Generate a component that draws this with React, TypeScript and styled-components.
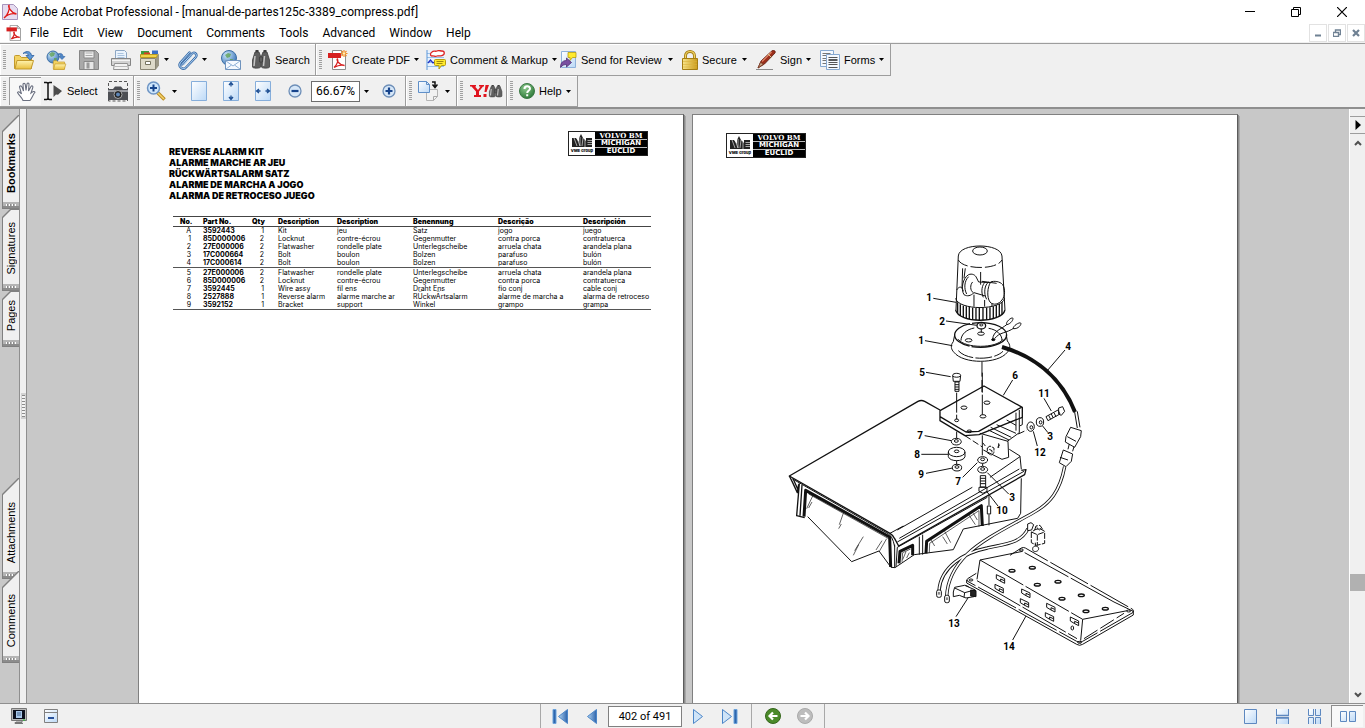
import React from "react";
import styled, { createGlobalStyle, css } from "styled-components";

const GlobalStyle = createGlobalStyle`
  * { box-sizing: border-box; }
  html, body, #root { height: 100%; }
  body {
    margin: 0;
    overflow: hidden;
    background: #f0f0f0;
    color: #000;
    font-family: Roboto, "Liberation Sans", sans-serif;
    font-size: 12px;
  }
  button, input { font: inherit; color: inherit; }
  svg { display: block; flex: none; }
`;

/* ---------- frame ---------- */

const Window = styled.div`
  display: flex;
  flex-direction: column;
  height: 100vh;
`;

const PlainButton = styled.button`
  display: flex;
  align-items: center;
  justify-content: center;
  margin: 0;
  padding: 0;
  border: 0;
  background: transparent;
`;

const TitleBar = styled.header`
  display: flex;
  align-items: center;
  height: 24px;
  padding-left: 2px;
  background: #fff;
`;

const Title = styled.h1`
  flex: 1;
  margin: 0 0 0 5px;
  font-size: 12px;
  font-weight: 400;
  line-height: 24px;
`;

const CaptionButton = styled(PlainButton)`
  width: 46px;
  height: 20px;
`;

const MenuBar = styled.nav`
  display: flex;
  align-items: center;
  height: 18px;
  padding-left: 6px;
  background: #fff;
`;

const MenuItem = styled(PlainButton)`
  padding: 0 7px;
  line-height: 18px;
`;

const Spacer = styled.div<{ $grow?: number }>`
  flex: ${(p) => p.$grow ?? 1};
`;

const MdiButton = styled(PlainButton)`
  width: 18px;
  height: 18px;
  margin-left: 1px;
  border: 1px solid #e2e2e2;
`;

/* ---------- toolbars ---------- */

const Toolbars = styled.div`
  border-top: 1px solid #f0f0f0;
  border-bottom: 2px solid #8f8f8f;
  background: #f0f0f0;
`;

const ToolRow = styled.div<{ $line?: boolean }>`
  display: flex;
  height: 31px;
  ${(p) => p.$line && css`height: 33px; border-top: 1px solid #9d9d9d;`}
`;

const ToolGroup = styled.div`
  display: flex;
  align-items: center;
  border-right: 1px solid #9d9d9d;
  border-bottom: 1px solid #9d9d9d;
  box-shadow: inset 1px 1px 0 #fff;
`;

const Grip = styled.div`
  width: 3px;
  height: 20px;
  margin: 0 3px;
  background: repeating-linear-gradient(#a0a0a0 0 1px, #f0f0f0 1px 2px);
`;

const ToolButton = styled(PlainButton)<{ $w: number; $active?: boolean; $label?: boolean }>`
  width: ${(p) => p.$w}px;
  height: 28px;
  gap: 4px;
  font-family: "Liberation Sans", Arial, sans-serif;
  font-size: 11px;
  white-space: nowrap;
  ${(p) => p.$label && css`justify-content: flex-start; padding: 0 6px 0 3px;`}
  ${(p) => p.$active && css`
    background: #f8f8f8;
    border-left: 1px solid #9d9d9d;
    border-top: 1px solid #9d9d9d;
  `}
`;

const ArrowSlot = styled.span`
  margin-left: auto;
`;

const ZoomField = styled.input`
  width: 49px;
  height: 21px;
  padding: 0 0 0 4px;
  border: 1px solid #6e6e6e;
  background: #fff;
`;

/* ---------- body ---------- */

const Body = styled.main`
  display: flex;
  flex: 1;
  min-height: 0;
  background: #c8c8c8;
`;

const TabStrip = styled.aside`
  display: flex;
  flex-direction: column;
  width: 20px;
  padding: 6px 0 40px 2px;
  border-right: 1px solid #8f8f8f;
`;

const cutCorner = css<{ $cut: number }>`
  clip-path: polygon(0 ${(p) => p.$cut}px, ${(p) => p.$cut}px 0, 100% 0, 100% 100%, 0 100%);
`;

const TabShape = styled(PlainButton)<{ $h: number; $cut: number; $overlap?: boolean }>`
  flex: none;
  flex-direction: column;
  justify-content: stretch;
  align-items: stretch;
  height: ${(p) => p.$h}px;
  margin-top: ${(p) => (p.$overlap ? "-8px" : "0")};
  padding: 1px 0 1px 1px;
  background: #808080;
  ${cutCorner}
`;

const TabFace = styled.span<{ $cut: number; $bold?: boolean }>`
  display: flex;
  flex: 1;
  align-items: center;
  justify-content: flex-end;
  padding-bottom: 9px;
  background: #f0f0f0;
  font-family: "Liberation Sans", Arial, sans-serif;
  font-size: 11px;
  font-weight: ${(p) => (p.$bold ? 700 : 400)};
  line-height: 16px;
  writing-mode: vertical-rl;
  ${cutCorner}
`;

const TabText = styled.span`
  writing-mode: vertical-rl;
  transform: rotate(180deg);
`;

const TabFoot = styled.span`
  height: 6px;
  padding: 2px 3px;
  background: #b4b4b4;
  border-bottom: 2px solid #8c8c8c;
  &::before {
    content: "";
    display: block;
    height: 2px;
    background: repeating-linear-gradient(90deg, #fff 0 1px, #8c8c8c 1px 2px, #b4b4b4 2px 3px);
  }
`;

const Splitter = styled.div`
  display: flex;
  align-items: center;
  justify-content: center;
  width: 7px;
  border-right: 1px solid #8f8f8f;
  background: #f0f0f0;
`;

const SplitHandle = styled.div`
  width: 5px;
  height: 26px;
  background: #d2d2d2;
  padding: 2px 1px;
  &::before {
    content: "";
    display: block;
    width: 3px;
    height: 22px;
    background: repeating-linear-gradient(#8c8c8c 0 1px, #f4f4f4 1px 3px);
  }
`;

const Pages = styled.section`
  display: flex;
  flex: 1;
  justify-content: center;
  gap: 8px;
  min-width: 0;
  overflow: hidden;
  padding-top: 5px;
`;

const Sheet = styled.article`
  flex: none;
  width: 546px;
  height: 705px;
  background: #fff;
  border: 1px solid #808080;
  border-right-color: #5c5c5c;
  box-shadow: 1px 1px 0 #8c8c8c, 2px 2px 0 #a8a8a8;
`;

const PartsHead = styled.div`
  display: flex;
  justify-content: space-between;
  padding: 16px 35px 0 30px;
`;

const KitNames = styled.h2`
  margin: 15px 0 0;
  font-family: Inter, "Liberation Sans", sans-serif;
  font-size: 9px;
  font-weight: 900;
  line-height: 11px;
  white-space: nowrap;
  span { display: block; }
`;

const PartsTable = styled.table`
  width: 478px;
  margin: 15px 0 0 34px;
  border-collapse: collapse;
  table-layout: fixed;
  font-family: Inter, "Liberation Sans", sans-serif;
  font-size: 7px;
  line-height: 8px;
  white-space: nowrap;
  th, td { padding: 0; text-align: left; height: 8px; }
  th { font-weight: 900; }
  thead th { padding-top: 1px; }
  thead tr { border-top: 1px solid #444; border-bottom: 1px solid #444; }
  td:nth-child(1) { padding-right: 12px; text-align: right; }
  th:nth-child(1) { padding-left: 7px; }
  td:nth-child(2) { font-weight: 700; }
  td:nth-child(3) { text-align: right; padding-right: 14px; }
  tbody { border-bottom: 1px solid #555; }
  tbody + tbody tr:first-child td { padding-top: 1px; }
`;

const LogoRow = styled.div`
  padding: 18px 0 0 33px;
`;

const DrawingRow = styled.div`
  padding: 82px 0 0 87px;
`;

const BrandBox = styled.div`
  display: flex;
  flex: none;
  width: 80px;
  height: 25px;
  border: 1px solid #222;
  background: #000;
`;

const BrandMark = styled.div`
  display: flex;
  flex-direction: column;
  align-items: center;
  width: 26px;
  padding-top: 2px;
  background: #fff;
  font-family: Inter, sans-serif;
  font-size: 4px;
  font-weight: 800;
  line-height: 5px;
  white-space: nowrap;
`;

const BrandNames = styled.div`
  flex: 1;
  background: #000;
  color: #fff;
  text-align: center;
  span {
    display: block;
    height: 8px;
    border-bottom: 1px solid #bbb;
    font-family: "DejaVu Sans", sans-serif;
    font-size: 7px;
    font-weight: 700;
    line-height: 7px;
  }
  span:first-child { font-family: "DejaVu Serif", serif; }
  span:last-child { border-bottom: 0; }
`;

const ScrollBar = styled.div`
  display: flex;
  flex-direction: column;
  width: 16px;
  border-left: 1px solid #fff;
  background: #f0f0f0;
`;

const SplitBox = styled.div`
  height: 8px;
  border-bottom: 1px solid #9d9d9d;
`;

const ScrollButton = styled(PlainButton)<{ $line?: boolean }>`
  height: 17px;
  ${(p) => p.$line && css`border-bottom: 1px solid #9d9d9d;`}
`;

const Thumb = styled.div`
  height: 17px;
  background: #b1b1b1;
`;

const StatusBar = styled.footer`
  display: grid;
  grid-template-columns: 1fr auto 1fr;
  height: 25px;
  border-top: 1px solid #8f8f8f;
  background: #f0f0f0;
`;

const StatusSide = styled.div<{ $end?: boolean }>`
  display: flex;
  align-items: center;
  padding: 0 2px 0 3px;
  justify-content: ${(p) => (p.$end ? "flex-end" : "flex-start")};
`;

const Pager = styled.div`
  display: flex;
  align-items: center;
  padding: 0 3px;
  border-left: 1px solid #a8a8a8;
  border-right: 1px solid #a8a8a8;
`;

const PageField = styled.input`
  width: 74px;
  height: 21px;
  padding: 0;
  border: 1px solid #808080;
  background: #fff;
  font-size: 11px;
  text-align: center;
`;

const Divider = styled.div`
  width: 1px;
  height: 24px;
  margin: 0 5px;
  background: #a8a8a8;
`;

const StatusButton = styled(PlainButton)<{ $active?: boolean }>`
  width: 32px;
  height: 22px;
  ${(p) => p.$active && css`
    background: #f8f8f8;
    border-left: 1px solid #8c8c8c;
    border-top: 1px solid #8c8c8c;
  `}
`;

/* ---------- icons ---------- */

type IconProps = { w?: number; h?: number; children: React.ReactNode };
const Icon = ({ w = 20, h = 20, children }: IconProps) => (
  <svg width={w} height={h} viewBox={`0 0 ${w} ${h}`} fill="none" aria-hidden="true">{children}</svg>
);

const Arrow = () => <Icon w={5} h={3}><path d="M0 0h5L2.500 3z" fill="#000" /></Icon>;

const GradientDefs = styled.svg`
  position: absolute;
`;

const Gradients = () => (
  <GradientDefs width="0" height="0" aria-hidden="true">
    <defs>
      <linearGradient id="folder" x1="0" y1="0" x2="0" y2="1"><stop stopColor="#fff3b0" /><stop offset="1" stopColor="#e9bf3c" /></linearGradient>
      <linearGradient id="paper" x1="0" y1="0" x2="1" y2="1"><stop stopColor="#ffffff" /><stop offset="1" stopColor="#bcd9f7" /></linearGradient>
      <linearGradient id="navy" x1="0" y1="0" x2="1" y2="0"><stop stopColor="#b4d6f2" /><stop offset="1" stopColor="#2a62ab" /></linearGradient>
      <linearGradient id="lock" x1="0" y1="0" x2="1" y2="0"><stop stopColor="#f9e58a" /><stop offset="1" stopColor="#c99a1a" /></linearGradient>
      <radialGradient id="globe" cx=".35" cy=".3" r=".8"><stop stopColor="#cfe9fb" /><stop offset="1" stopColor="#2f6cb3" /></radialGradient>
      <radialGradient id="green" cx=".4" cy=".3" r=".8"><stop stopColor="#8cc98c" /><stop offset="1" stopColor="#23702f" /></radialGradient>
    </defs>
  </GradientDefs>
);

const Folder = () => (
  <g stroke="#c39a2c">
    <path d="M.5 6.500q0-1 1-1h4l2 2h10v11H.5z" fill="#f3d262" />
    <path d="M3 10.500h16.500l-2.500 8.500H1z" fill="url(#folder)" />
  </g>
);
const OpenIcon = () => (
  <Icon w={22}><Folder /><path d="M9 3.500c4-3.500 8-2 8.500 2h2.500l-4 4.500-4-4.500h2.500c-.5-2.500-3-3-5.500-2z" fill="#5f98d6" stroke="#2d5f9f" strokeWidth=".8" /></Icon>
);
const Globe = ({ x = 7, y = 7, r = 6 }: { x?: number; y?: number; r?: number }) => (
  <g>
    <circle cx={x} cy={y} r={r} fill="url(#globe)" stroke="#3b6ea5" />
    <path d={`M${x - 4} ${y - 3}l3-2 3 1-1 3-3 1zM${x + 1} ${y + 1}l3 0-1 3-2 0z`} fill="#5fa055" opacity=".8" />
  </g>
);
const WebIcon = () => (
  <Icon w={22}>
    <Globe />
    <g transform="translate(7 7) scale(.66)"><Folder /></g>
    <path d="M12 4c3-1.500 5 0 5 2.500h2l-3 3-3-3h1.500c0-1.500-1-2-2.500-1.500z" fill="#4f86c6" stroke="#2d5f9f" strokeWidth=".6" />
  </Icon>
);
const SaveIcon = () => (
  <Icon>
    <path d="M.5.5h16l3 3v16H.5z" fill="#a9a9a9" stroke="#858585" />
    <path d="M5 1h10v7H5z" fill="#f0f0f0" stroke="#888" /><path d="M6.500 3h7M6.500 5.500h7" stroke="#aaa" />
    <path d="M5 11.500h10v8H5z" fill="#e6e6e6" stroke="#888" /><path d="M7.500 12.500h3v6h-3z" fill="#999" />
  </Icon>
);
const PrintIcon = () => (
  <Icon>
    <path d="M4.500 9V.5h9l2 2V9z" fill="#eaf3fd" stroke="#8da7c4" /><path d="M6.500 3.500h6M6.500 5.500h7M6.500 7.500h7" stroke="#a9c3df" />
    <path d="M.5 8.500h19v7H.5z" fill="#d2d2d2" stroke="#858585" /><path d="M1 10.500h18" stroke="#f4f4f4" />
    <path d="M3.500 13.500h13l1 6h-15z" fill="#f2f2f2" stroke="#929292" /><path d="M4 16.500h12" stroke="#b9b9b9" />
  </Icon>
);
const OrganizerIcon = () => (
  <Icon>
    <path d="M16 6.500l3-3v12l-3 4z" fill="#9c9886" />
    <path d="M1 5V1h8v4z" fill="#3a9d3f" /><path d="M4 5V2.500h6V5z" fill="#d93b25" /><path d="M12 4V.5h6V4z" fill="#3a6ec5" />
    <path d="M.5 4.500h17l-1 3H.5z" fill="#f0d34a" stroke="#b99a24" />
    <path d="M.5 8.500h15v11H.5z" fill="#dedac9" stroke="#8a8674" /><path d="M5.500 11.500h5v3h-5z" fill="#fff" stroke="#77745f" />
  </Icon>
);
const ClipIcon = () => (
  <Icon>
    <path d="M4 14.500L13.500 4c3-3 6.500.5 4 3.500L8.500 17c-3.500 4-9-.5-6-4.500l9-10" stroke="#3a6ca8" strokeWidth="2.400" strokeLinecap="round" />
    <path d="M4 14.500L13.500 4c3-3 6.500.5 4 3.500L8.500 17c-3.500 4-9-.5-6-4.500l9-10M6 15l8-9" stroke="#b4d6f5" strokeWidth="1" strokeLinecap="round" />
  </Icon>
);
const MailIcon = () => (
  <Icon><Globe x={8} y={8} r={7.500} /><path d="M4.500 10.500h15v9h-15z" fill="#f5f9ff" stroke="#6f93bd" /><path d="M5 11l7 5 7-5M5 19l5.500-4M19 19l-5.500-4" stroke="#8fb1d8" /></Icon>
);
const Binoculars = () => (
  <g fill="#5f5f5f" stroke="#3c3c3c" strokeWidth=".8">
    <path d="M3 2h4l1.500 4v11c0 1.500-8 1.500-8 0V10z" /><path d="M15 2h-4l-1.500 4v11c0 1.500 8 1.500 8 0V10z" /><path d="M7.500 7h3v5h-3z" />
    <path d="M3 6L2 16M12.500 6l-1 10" stroke="#c6c6c6" strokeWidth="1.500" /><path d="M3.500 1h3M11.500 1h3" strokeWidth="2" />
  </g>
);
const SearchIcon = () => <Icon w={19}><Binoculars /></Icon>;

const PdfGlyph = ({ big }: { big?: boolean }) => (
  <g>
    <path d="M4.500.5h9l4 4v15h-13z" fill="#fff" stroke="#8b8b8b" /><path d="M13.500.5v4h4z" fill="#ddd" stroke="#999" />
    <path d="M0 3h13v5H0z" fill="#d61f1f" />
    <path d="M6 17.500c3-2.500 4.500-7 3.500-8.500-1.500 0 1 6 7 6.500-3-1-7 0-10.500 2z" stroke="#d61f1f" strokeWidth={big ? 1.300 : 1.600} />
  </g>
);
const CreatePdfIcon = () => (
  <Icon w={20}><PdfGlyph big /><path d="M16 0v7M12.500 3.500h7M13.500 1l5 5M18.500 1l-5 5" stroke="#f08a24" strokeWidth="1.100" /><circle cx="16" cy="3.500" r="1.300" fill="#fff1b8" /></Icon>
);
const CommentIcon = () => (
  <Icon>
    <path d="M.5.5h18v19H.5z" fill="#e9f3fe" /><path d="M1 3.500h17M1 7.500h17M1 12.500h17M1 16.500h17" stroke="#98bfe8" /><path d="M1 0v20" stroke="#5f97d6" />
    <path d="M6 2c2-2 3 0 5-1s3 0 5 0c3 0 3 4 0 4.500-2 1-4 0-5 .5-2 1-3-.5-5 0-2 0-2-3 0-4z" fill="#fff" stroke="#dd2222" strokeWidth="1.300" />
    <path d="M2 13l2.500-3L7 13l1.500-1" stroke="#1c2fc4" strokeWidth="1.200" />
    <path d="M9.500 9.500h9q1 0 1 1v4q0 1-1 1h-3l-2.500 3.500v-3.500h-3.500q-1 0-1-1v-4q0-1 1-1z" fill="#ffea2e" stroke="#b59b10" /><path d="M10.500 11.500h7M10.500 13.500h6" stroke="#a08a10" />
  </Icon>
);
const ReviewIcon = () => (
  <Icon w={17} h={18}>
    <path d="M1.500.5h14v16h-14z" fill="url(#paper)" stroke="#8fb2db" />
    <path d="M8 1.500h8v5h-3.500L10 9.500v-3H8z" fill="#ffea2e" stroke="#b59b10" strokeWidth=".8" />
    <path d="M.5 16.500c0-5 2.500-7 6-7V7l5 4.500-5 4.500v-2.500c-2 0-4 .5-6 3z" fill="#7a4fa0" stroke="#4c2f72" strokeWidth=".8" />
  </Icon>
);
const LockIcon = () => (
  <Icon w={16}><path d="M3.500 9V6c0-6 9-6 9 0v3" stroke="#a47d14" strokeWidth="3" /><path d="M3.500 9V6c0-6 9-6 9 0v3" stroke="#f2d465" strokeWidth="1.200" /><path d="M.5 8.500h15v11H.5z" fill="url(#lock)" stroke="#a47d14" /><path d="M1 11.500h14M1 14.500h14M1 17h14" stroke="#dcb23a" strokeWidth=".6" /></Icon>
);
const SignIcon = () => (
  <Icon>
    <path d="M2 18l3-7L16 .8c2-1.300 4 .5 3 2.200L8.500 14z" fill="#9b2f1c" stroke="#5a190e" strokeWidth=".8" />
    <path d="M6 11.500L15.500 2" stroke="#e08568" strokeWidth="1.200" /><path d="M2 18l2.500-5.500 3 1.500z" stroke="#7a3a22" fill="#c9a88a" strokeWidth=".8" /><path d="M12 4l3.500 3.500" stroke="#d8c78a" /><path d="M0 19.500h17" stroke="#8a8a8a" />
  </Icon>
);
const FormsIcon = () => (
  <Icon>
    <path d="M.5.5h13v16H.5z" fill="#f4f9ff" stroke="#86a9d1" /><path d="M2.500 3.500h8M2.500 5.500h8M2.500 8.500h8M2.500 10.500h4M2.500 13.500h4" stroke="#777" />
    <path d="M6.500 4.500h13v15h-13z" fill="#f4f9ff" stroke="#86a9d1" /><path d="M8.500 7.500h9M8.500 12.500h9M8.500 14.500h9M8.500 17.500h9" stroke="#555" /><path d="M8.500 10h9" stroke="#222" strokeWidth="1.500" />
  </Icon>
);

const HandIcon = () => (
  <Icon w={20}><path d="M7 18.500c-1-3-4-5-5.500-8 1-1.500 2.500-.5 4 1.500L3.500 5c0-1.500 2-1.500 2.500 0l1.500 4L7 2.500c0-1.500 2-1.500 2.300 0L10 8.500l1-6.500c.3-1.500 2.300-1 2 .5L12.500 9l2.500-4.500c.8-1.300 2.300-.3 1.800 1L15 11c2-1.500 3.500-2 4-.8-2 2.300-3 5.800-5 8.300z" fill="#fff" stroke="#6b7080" strokeWidth="1.100" /></Icon>
);
const SelectIcon = () => (
  <Icon w={19}><path d="M0 1.500h2.500q1.500 0 1.500 1.500v14q0 1.500-1.500 1.500H0M8 1.500H5.500Q4 1.500 4 3M8 18.500H5.500Q4 18.500 4 17" stroke="#111" strokeWidth="1.500" /><path d="M9.500 4v12l2.500-2.500 2 .2L18 10z" fill="#4b4b4b" /></Icon>
);
const CameraIcon = () => (
  <Icon w={20} h={21}>
    <path d="M.5 20V.5h19V20z" stroke="#555" strokeDasharray="3 2" />
    <path d="M0 8h5l2-2.500h6L15 8h5v11H0z" fill="#4d4f54" /><path d="M0 10h20" stroke="#9d9fa5" strokeWidth="2" />
    <circle cx="10" cy="13.500" r="4" fill="#222" stroke="#a9a9a9" /><circle cx="10" cy="13.500" r="2" fill="#5f87b8" />
  </Icon>
);
const ZoomInIcon = () => (
  <Icon w={20}><path d="M11 11l7.500 7.500" stroke="#b98a22" strokeWidth="3.500" /><path d="M11 11l7 7" stroke="#f5d36a" strokeWidth="1.500" /><circle cx="7.500" cy="7" r="6" fill="#cfe6fb" stroke="#6d94c4" strokeWidth="1.500" /><path d="M7.500 3.500v7M4 7h7" stroke="#17448c" strokeWidth="2" /></Icon>
);
const PageIcon = ({ kind }: { kind?: "v" | "h" }) => (
  <Icon w={16}>
    <path d="M.5.5h15v19H.5z" fill="url(#paper)" stroke="#86aedb" />
    {kind === "v" && <path d="M8 1.500v4M6 4l2-2.500L10 4M8 18.500v-4M6 16l2 2.500 2-2.500" stroke="#1d4e92" strokeWidth="1.300" />}
    {kind === "h" && <path d="M1.500 10h4M4 8l-2.500 2L4 12M14.500 10h-4M12 8l2.500 2-2.500 2" stroke="#1d4e92" strokeWidth="1.300" />}
  </Icon>
);
const RoundIcon = ({ plus }: { plus?: boolean }) => (
  <Icon w={14} h={14}><circle cx="7" cy="7" r="6" fill="#d6e7f8" stroke="#6e8fb8" strokeWidth="1.300" /><path d={plus ? "M3.500 7h7M7 3.500v7" : "M3.500 7h7"} stroke="#17448c" strokeWidth="2.200" /></Icon>
);
const RotateIcon = () => (
  <Icon w={20}><path d="M8.500 8.500h11v7l-4 4h-7z" fill="#f2f2f2" stroke="#b4b4b4" /><path d="M15.500 19.500v-4h4" stroke="#a9a9a9" /><path d="M.5.5h8l3 3v8H.5z" fill="url(#paper)" stroke="#5f8fc8" /><path d="M8.500.5v3h3" stroke="#5f8fc8" /><path d="M14 1h3v5M14.500 3.500L17 6.500l2.500-3" stroke="#111" strokeWidth="1.500" /></Icon>
);
const YahooIcon = () => (
  <Icon w={33} h={14}>
    <path d="M0 1h6v1.500H5L8 6l2.500-3.500H9V1h5v1.500h-1l-4 5V11h2v2H4v-2h2V7.500L1.500 2.500H0zM15.500 1H19l-2.500 7h-2zM13.500 10h3v3h-3z" fill="#e0141e" />
    <g transform="translate(19 1) scale(.74 .66)"><Binoculars /></g>
  </Icon>
);
const HelpIcon = () => (
  <Icon w={16} h={16}><circle cx="8" cy="8" r="7.500" fill="url(#green)" stroke="#3c7a45" /><path d="M5.500 6c0-3.500 5.500-3.500 5.500-.3C11 7.500 8.200 7.500 8.200 10M8.200 11.300v2" stroke="#fff" strokeWidth="2" /></Icon>
);

const NavIcon = ({ dir, bar }: { dir: "l" | "r"; bar?: boolean }) => (
  <Icon w={16} h={15}>
    <g transform={dir === "r" ? "translate(16 0) scale(-1 1)" : undefined}>
      {bar && <path d="M1 .5h3v14H1z" fill="#2f66ad" stroke="#6ba3dc" />}
      <path d={bar ? "M15.500.5v14L6.500 7.500z" : "M12.500.5v14L3.500 7.500z"} fill={dir === "l" ? "url(#navy)" : "#cfe4f8"} stroke="#4c86c8" />
    </g>
  </Icon>
);
const RoundNav = ({ on }: { on?: boolean }) => (
  <Icon w={16} h={16}>
    <circle cx="8" cy="8" r="7.500" fill={on ? "#4b8a2a" : "#bdbdbd"} stroke={on ? "#35661c" : "#a9a9a9"} />
    <path d={on ? "M12.500 8H5M8 4.500L4.500 8 8 11.500" : "M3.500 8H11M8 4.500L11.500 8 8 11.500"} stroke="#fff" strokeWidth="2.200" />
  </Icon>
);
const LayoutIcon = ({ kind }: { kind: "single" | "cont" | "contFacing" | "facing" }) => (
  <Icon w={16} h={15}>
    <g fill="url(#paper)" stroke="#5d88c0">
      {kind === "single" && <path d="M1.500.5h12v14h-12z" />}
      {kind === "cont" && <><path d="M1.500 0v6.500h12V0M1.500 15V8.500h12V15" /><path d="M1 6.500h13M1 9h13" strokeWidth="1.500" /></>}
      {kind === "contFacing" && <path d="M1.500 0v6.500h5V0M8.500 0v6.500h5V0M1.500 15V8.500h5V15M8.500 15V8.500h5V15" />}
      {kind === "facing" && <path d="M.5 2.500h6v10h-6zM9.500 2.500h6v10h-6z" />}
    </g>
  </Icon>
);

/* ---------- document content ---------- */

const Brand = () => (
  <BrandBox>
    <BrandMark>
      <Icon w={20} h={14}>
        <path d="M0 4h4l3 4V4l2-4 2 4 3 3V4h6v9H0z" fill="#222" />
        <path d="M2 4l3 8M5 4l3 8M8 3v9M11 4l-1 8M13 6v7M15.500 6.500H20M15.500 8.500H20M15.500 10.500H20" stroke="#fff" strokeWidth=".6" />
      </Icon>
      <span>VME Group</span>
    </BrandMark>
    <BrandNames><span>VOLVO BM</span><span>MICHIGAN</span><span>EUCLID</span></BrandNames>
  </BrandBox>
);

const kitNames = ["REVERSE ALARM KIT", "ALARME MARCHE AR JEU", "RÜCKWÄRTSALARM SATZ", "ALARME DE MARCHA A JOGO", "ALARMA DE RETROCESO JUEGO"];
const columns: [string, number][] = [["No.", 30], ["Part No.", 49], ["Qty", 26], ["Description", 59], ["Description", 76], ["Benennung", 85], ["Descrição", 85], ["Descripción", 68]];
const parts: string[][][] = [
  [
    ["A", "3592443", "1", "Kit", "jeu", "Satz", "jogo", "juego"],
    ["1", "85D000006", "2", "Locknut", "contre-écrou", "Gegenmutter", "contra porca", "contratuerca"],
    ["2", "27E000006", "2", "Flatwasher", "rondelle plate", "Unterlegscheibe", "arruela chata", "arandela plana"],
    ["3", "17C000664", "2", "Bolt", "boulon", "Bolzen", "parafuso", "bulón"],
    ["4", "17C000614", "2", "Bolt", "boulon", "Bolzen", "parafuso", "bulón"],
  ],
  [
    ["5", "27E000006", "2", "Flatwasher", "rondelle plate", "Unterlegscheibe", "arruela chata", "arandela plana"],
    ["6", "85D000006", "2", "Locknut", "contre-écrou", "Gegenmutter", "contra porca", "contratuerca"],
    ["7", "3592445", "1", "Wire assy", "fil ens", "Draht Ens", "fio conj", "cable conj"],
    ["8", "2527888", "1", "Reverse alarm", "alarme marche ar", "RÜckwÄrtsalarm", "alarme de marcha a", "alarma de retroceso"],
    ["9", "3592152", "1", "Bracket", "support", "Winkel", "grampo", "grampa"],
  ],
];

const Callout = styled.text`
  font-family: Roboto, "Liberation Sans", sans-serif;
  font-size: 10px;
  font-weight: 700;
  text-anchor: middle;
  fill: #000;
`;

const callouts: [string, number, number][] = [
  ["1", 929, 301], ["2", 942, 325], ["1", 921, 344], ["4", 1068, 350], ["5", 922, 376], ["6", 1015, 379],
  ["11", 1044, 397], ["3", 1050, 440], ["12", 1040, 456], ["7", 920, 439], ["8", 917, 458], ["9", 921, 478],
  ["7", 958, 485], ["3", 1012, 501], ["10", 1002, 514], ["13", 954, 627], ["14", 1009, 650],
];

const Beacon = () => (
  <g transform="translate(700 110) scale(.3333)">
    <path d="M775 438L768 600M906 438l9 162M775 438c3-40 127-40 131 0" />
    <path d="M775 450c15 30 116 30 131 0" strokeDasharray="34 9" />
    <ellipse cx="840" cy="423" rx="22" ry="12" />
    <path d="M767 565c8 37 138 37 147 0" />
    <path d="M767 600c8 41 138 41 148 0" strokeWidth="4" />
    <path d="M773 577v35M781 583v35M790 587v34M799 589v36M808 591v36M818 593v36M828 594v36M838 594v37M849 594v37M860 593v36M870 592v36M880 589v36M889 586v36M898 582v36M906 576v37" strokeWidth="4" />
    <path d="M792 554c-10-16-4-50 14-60 10-4 20 0 24 10l6 12 36 2M792 554c10 6 20 4 30-6l34 10M818 516c-8 8-8 26 2 32M806 500c-14 14-14 36-6 52" />
    <path d="M856 516c-10 8-14 30-6 46M866 516c-12 8-16 34-6 52M872 516c10-4 28-2 36 8 8 12 8 34-2 46-8 12-26 18-36 6-10-14-8-44 2-60zM842 486v38M846 514l44 6" />
    <path d="M770 540c8-12 16-12 20 4M822 554v36M854 570v20M876 580v10M788 475l-2 60M796 475l-4 30" />
    <path d="M700 565l68 12M738 633l92 13M675 692l82 15" />
    <ellipse cx="844" cy="647" rx="13" ry="10" strokeWidth="4" /><ellipse cx="844" cy="645" rx="5" ry="3" />
    <ellipse cx="842" cy="675" rx="78" ry="37" strokeDasharray="120 6" strokeWidth="4" />
    <path d="M783 692c0-20 18-34 40-38M866 655c24 4 40 18 40 36M775 688c20 28 114 28 134 0" />
    <path d="M764 675l-4 20c-10 12-6 24 2 32 28 36 132 36 160 0 10-10 10-22 0-34l-3-18" />
    <path d="M775 722c26 30 106 30 134 2" strokeDasharray="50 7" />
    <ellipse cx="843" cy="671" rx="10" ry="5" /><ellipse cx="806" cy="691" rx="10" ry="5" />
    <ellipse cx="880" cy="689" rx="5" ry="3" fill="#000" />
    <path d="M878 688c2-26 26-30 42-44M884 686c14-20 36-16 58-32M920 644c-4-8 14-22 18-20s-4 18-18 20zM940 656c-2-8 18-20 22-17s-6 19-22 17z" />
    <path d="M844 658v10M846 756v90" strokeDasharray="44 10" />
  </g>
);

const Cab = () => (
  <g transform="translate(780 370) scale(.3333)">
    <path d="M480 120l-46-26q-10-5-20 0L28 318l302 172q10 6 14 16l12 22 378-214 4-15-14 2" strokeWidth="4" />
    <path d="M36 326l290 166q10 8 14 22l4 16M352 516l380-212M358 505l360-208M352 480l225-128M630 322l90-62M330 490l40-22M688 238l32 20 4 40M724 325l-2 105-9 15-163 32-30 62-117 15-58 39-12-1-36-49L215 575 83 440" />
    <path d="M28 318l10 20 14 30 4-25M40 328l16 36M58 340l-8 97 24 6M66 345l-6 92" strokeWidth="4" />
    <path d="M72 440l5-79 252 140 3 90" strokeWidth="9" />
    <path d="M86 372l240 134" strokeWidth="2" />
    <path d="M344 524v68M352 532l-4 58M418 500v54M428 494v60M352 532l270-150" />
    <path d="M357 580l3-36 38-18v30M438 550l2-36 164-107 3 61" strokeWidth="9" />
    <path d="M366 576l2-28 24-11M448 548l1-28 148-98v48" strokeWidth="2" />
    <path d="M100 374l-20 42M96 396l-10 18M190 430l-12 34M184 462l-8 14M250 500l-26 42M236 524l-16 32M320 506l-22 38M306 512l-18 28M494 484l18 34M488 500l14 22M566 434l20 30M580 430l12 20M452 508l12 20M378 545l-10 24M388 548l-8 16" strokeWidth="2" />
    <path d="M480 122l132-74 115 64v30L597 194l-42 3-75-45zM480 140l78 46 38-2 128-72" strokeWidth="4" />
    <path d="M727 142v22l-8 4M718 120v68l-36 26M708 128v54M625 180l62 30M632 172l62 30M650 164l58 26M680 150l28 16M600 190l84 24 2 48-20 6-56-28" />
    <path d="M715 192l26-12M555 197l52 34" strokeDasharray="20 8" />
    <ellipse cx="552" cy="113" rx="9" ry="5" /><ellipse cx="621" cy="98" rx="9" ry="5" /><ellipse cx="609" cy="139" rx="9" ry="5" /><ellipse cx="530" cy="151" rx="6" ry="4" /><ellipse cx="568" cy="184" rx="7" ry="4" />
    <path d="M530 68v80M530 185v20M607 8v126M607 196v62M530 272v10M608 280v8" strokeDasharray="60 6" />
    <path d="M518 16c0-8 24-8 24 0l-2 18h-20zM525 36h12v28h-12zM525 44h12M525 51h12M525 58h12M518 18c6 5 18 5 24 0" />
    <ellipse cx="529" cy="215" rx="15" ry="10" /><ellipse cx="529" cy="213" rx="6" ry="4" />
    <ellipse cx="530" cy="246" rx="25" ry="14" /><path d="M505 246v14c4 16 46 16 50 0v-14" /><ellipse cx="530" cy="244" rx="7" ry="4" />
    <ellipse cx="531" cy="293" rx="14" ry="10" /><ellipse cx="531" cy="291" rx="6" ry="4" />
    <ellipse cx="608" cy="270" rx="15" ry="10" /><ellipse cx="608" cy="268" rx="6" ry="4" />
    <ellipse cx="608" cy="299" rx="15" ry="10" /><ellipse cx="608" cy="297" rx="6" ry="4" />
    <path d="M601 317h16v34h-16zM601 325h16M601 333h16M601 341h16M597 352h24v12l-12 6-12-6zM627 375v30M622 408h10v24h-10zM627 434v32" />
    <path d="M622 234l8-6 12 6v14l-8 8-12-8zM628 238l8 4v8M652 232l8-8M608 218l8 10M656 220v14" strokeDasharray="14 3" />
    <ellipse cx="752" cy="170" rx="11" ry="14" /><ellipse cx="754" cy="172" rx="4" ry="5" />
    <ellipse cx="780" cy="156" rx="11" ry="13" /><ellipse cx="782" cy="157" rx="4" ry="5" />
    <path d="M798 140l36-20 6 12-36 20zM806 136l6 12M814 132l6 12M822 128l6 12M836 114l12-4 6 14-10 12-8-4z" />
    <path d="M438 7l74 13M698 30l-28 46M792 85l22 38M788 168l16 20M760 184l12 44M434 197l80 15M424 253h80M438 310l80-16M548 322l44-44M622 308l64 64M620 364l34 44" />
    <path d="M884 126l8 48M892 124l8 48M872 172l32 10-2 18-18 32-28-16 2-16zM862 200l26 14M868 222l-4 16M882 230l-4 14M850 240l28 12-4 22-16 16-20-12zM840 262l24 8" />
  </g>
);

const Harness = () => (
  <g transform="translate(900 510) scale(.3333)">
    <g strokeWidth="10"><path d="M494-130C480-56 450-20 400 8 330 48 250 86 200 134c-36 36-58 76-60 126M384 56c-20 44-70 46-122 58-70 14-140 56-145 128" /></g>
    <g stroke="#fff" strokeWidth="5"><path d="M494-130C480-56 450-20 400 8 330 48 250 86 200 134c-36 36-58 76-60 126M384 56c-20 44-70 46-122 58-70 14-140 56-145 128" /></g>
    <g fill="#fff"><rect x="110" y="240" width="14" height="22" rx="5" /><rect x="134" y="256" width="14" height="22" rx="5" /><path d="M383 42l10-4 8 6-6 16-12 2z" /></g>
    <path d="M117 246v8M141 262v8" />
    <path d="M394 66v32l16 8 24-6V64l-14-8-12 2zM394 66l18 8 22-8M412 74v32M404 60l4-12 12-2 8 12M410 52l8 8 6-6" strokeDasharray="18 4" />
    <path d="M398 116c0-10 18-10 18 0s-18 12-18 2zM406 98v10" />
    <path d="M240 150l128-26M374 128l268 148M240 150l-9 58M240 150l308 178M548 328l134-26M548 328l-6 64M231 212l300 174M642 276l58 28" strokeDasharray="150 8" />
    <path d="M330 136l34-22q6-3 12 0l14 8 308 176q5 4 0 10L548 394q-8 6-18 0L203 214q-4-5 0-8l26-16" strokeDasharray="130 9" />
    <path d="M200 210v9l330 184q9 6 18 0l152-88v-12" />
    <path d="M552 386l120-76" strokeDasharray="48 10" />
    <g strokeWidth="4">
      <ellipse cx="397" cy="173" rx="9" ry="4" /><ellipse cx="336" cy="182" rx="9" ry="4" /><ellipse cx="474" cy="215" rx="9" ry="4" /><ellipse cx="412" cy="224" rx="9" ry="4" /><ellipse cx="544" cy="256" rx="9" ry="4" /><ellipse cx="486" cy="266" rx="9" ry="4" /><ellipse cx="616" cy="296" rx="9" ry="4" /><ellipse cx="558" cy="304" rx="9" ry="4" />
    </g>
    <ellipse cx="364" cy="120" rx="6" ry="3" /><ellipse cx="213" cy="210" rx="6" ry="3" /><ellipse cx="686" cy="303" rx="6" ry="3" /><ellipse cx="539" cy="397" rx="6" ry="3" /><ellipse cx="517" cy="354" rx="4" ry="6" />
    <g fill="#fff">
      {[[300, 206], [296, 235], [376, 249], [372, 278], [451, 292], [447, 320], [522, 333]].map(([x, y]) => (
        <path key={`${x}-${y}`} d={`M${x - 11} ${y - 12}l25 12v14l-12-6M${x - 11} ${y - 12}v12l13 8v-7l11 5`} />
      ))}
    </g>
    <path d="M160 246l4-14 30-6 32 14-4 20-24 4-20-8-18 4zM164 234l30 14 30-8M194 248l-2 14M196 226l10 4" />
    <path d="M212 240l16 2v18l-16-2z" fill="#222" />
    <path d="M204 264l-36 56M378 318l-40 72" />
  </g>
);

const Diagram = () => (
  <svg width="360" height="420" viewBox="780 240 360 420" fill="none" role="img" aria-label="Rotating beacon assembly">
    <g stroke="#111" strokeWidth="3" strokeLinejoin="round">
      <Beacon />
      <Cab />
      <Harness />
      <path d="M1002 347c34 10 60 32 73 65" strokeWidth="4" />
      <path d="M1065 350l-18 21" strokeWidth="1" />
    </g>
    {callouts.map(([t, x, y]) => <Callout key={`${x}-${y}`} x={x} y={y}>{t}</Callout>)}
  </svg>
);

/* ---------- side tabs ---------- */

const SideTab = ({ label, h, cut, bold, overlap }: { label: string; h: number; cut: number; bold?: boolean; overlap?: boolean }) => (
  <TabShape $h={h} $cut={cut} $overlap={overlap}>
    <TabFace $cut={cut} $bold={bold}><TabText>{label}</TabText></TabFace>
    <TabFoot />
  </TabShape>
);

const menus = ["File", "Edit", "View", "Document", "Comments", "Tools", "Advanced", "Window", "Help"];

export default function App() {
  return (
    <Window>
      <GlobalStyle />
      <Gradients />
      <TitleBar>
        <Icon w={16} h={18}>
          <path d="M.5 1.500h11l4 4v11H.5z" fill="#e6dcf0" stroke="#a795bd" />
          <path d="M2 15C6 12 8 6 7 2.500 5.500 3 9 10 14.500 11 10 10 5 12 2 15z" stroke="#e01b1b" strokeWidth="1.400" fill="#fff" />
        </Icon>
        <Title>Adobe Acrobat Professional - [manual-de-partes125c-3389_compress.pdf]</Title>
        <CaptionButton aria-label="Minimize"><Icon w={10} h={10}><path d="M0 4.500h10" stroke="#000" /></Icon></CaptionButton>
        <CaptionButton aria-label="Restore"><Icon w={10} h={10}><path d="M.5 2.500h7v7h-7zM2.500 2.500v-2h7v7h-2" stroke="#000" /></Icon></CaptionButton>
        <CaptionButton aria-label="Close"><Icon w={10} h={10}><path d="M0 0l10 10M10 0L0 10" stroke="#000" strokeWidth="1.200" /></Icon></CaptionButton>
      </TitleBar>
      <MenuBar>
        <svg width="17" height="16" viewBox="0 0 20 20" fill="none" aria-hidden="true"><PdfGlyph /></svg>
        {menus.map((m) => <MenuItem key={m}>{m}</MenuItem>)}
        <Spacer />
        <MdiButton aria-label="Minimize document"><Icon w={8} h={8}><path d="M1 6.500h6" stroke="#6f8193" strokeWidth="2" /></Icon></MdiButton>
        <MdiButton aria-label="Restore document"><Icon w={8} h={8}><path d="M0 3.500h5.500v4H.5zM2.500 3V1H7.500v4.500H6" stroke="#6f8193" strokeWidth="1.400" /></Icon></MdiButton>
        <MdiButton aria-label="Close document"><Icon w={8} h={8}><path d="M1 1l6 6M7 1L1 7" stroke="#6f8193" strokeWidth="2.200" /></Icon></MdiButton>
      </MenuBar>

      <Toolbars>
        <ToolRow $line>
          <ToolGroup>
            <Grip />
            <ToolButton $w={32} aria-label="Open"><OpenIcon /></ToolButton>
            <ToolButton $w={32} aria-label="Open web page"><WebIcon /></ToolButton>
            <ToolButton $w={32} aria-label="Save"><SaveIcon /></ToolButton>
            <ToolButton $w={32} aria-label="Print"><PrintIcon /></ToolButton>
            <ToolButton $w={38} $label aria-label="Organizer"><OrganizerIcon /><ArrowSlot><Arrow /></ArrowSlot></ToolButton>
            <ToolButton $w={38} $label aria-label="Attach"><ClipIcon /><ArrowSlot><Arrow /></ArrowSlot></ToolButton>
            <ToolButton $w={36} aria-label="Email"><MailIcon /></ToolButton>
            <ToolButton $w={66} $label><SearchIcon />Search</ToolButton>
          </ToolGroup>
          <ToolGroup>
            <Grip />
            <ToolButton $w={98} $label><CreatePdfIcon />Create PDF<ArrowSlot><Arrow /></ArrowSlot></ToolButton>
            <ToolButton $w={134} $label><CommentIcon />Comment &amp; Markup<ArrowSlot><Arrow /></ArrowSlot></ToolButton>
            <ToolButton $w={122} $label><ReviewIcon />Send for Review<ArrowSlot><Arrow /></ArrowSlot></ToolButton>
            <ToolButton $w={74} $label><LockIcon />Secure<ArrowSlot><Arrow /></ArrowSlot></ToolButton>
            <ToolButton $w={64} $label><SignIcon />Sign<ArrowSlot><Arrow /></ArrowSlot></ToolButton>
            <ToolButton $w={73} $label><FormsIcon />Forms<ArrowSlot><Arrow /></ArrowSlot></ToolButton>
          </ToolGroup>
        </ToolRow>
        <ToolRow>
          <ToolGroup>
            <Grip />
            <ToolButton $w={32} $active aria-label="Hand"><HandIcon /></ToolButton>
            <ToolButton $w={62} $label><SelectIcon />Select</ToolButton>
            <ToolButton $w={30} aria-label="Snapshot"><CameraIcon /></ToolButton>
          </ToolGroup>
          <ToolGroup>
            <Grip />
            <ToolButton $w={40} $label aria-label="Zoom in tool"><ZoomInIcon /><ArrowSlot><Arrow /></ArrowSlot></ToolButton>
            <ToolButton $w={32} aria-label="Actual size"><PageIcon /></ToolButton>
            <ToolButton $w={32} aria-label="Fit page"><PageIcon kind="v" /></ToolButton>
            <ToolButton $w={32} aria-label="Fit width"><PageIcon kind="h" /></ToolButton>
            <ToolButton $w={32} aria-label="Zoom out"><RoundIcon /></ToolButton>
            <ZoomField aria-label="Zoom" defaultValue="66.67%" />
            <ToolButton $w={13} aria-label="Zoom levels"><Arrow /></ToolButton>
            <ToolButton $w={32} aria-label="Zoom in"><RoundIcon plus /></ToolButton>
          </ToolGroup>
          <ToolGroup>
            <Grip />
            <ToolButton $w={41} $label aria-label="Rotate"><RotateIcon /><ArrowSlot><Arrow /></ArrowSlot></ToolButton>
          </ToolGroup>
          <ToolGroup>
            <Grip />
            <ToolButton $w={40} aria-label="Yahoo search"><YahooIcon /></ToolButton>
          </ToolGroup>
          <ToolGroup>
            <Grip />
            <ToolButton $w={61} $label><HelpIcon />Help<ArrowSlot><Arrow /></ArrowSlot></ToolButton>
          </ToolGroup>
        </ToolRow>
      </Toolbars>

      <Body>
        <TabStrip>
          <SideTab label="Bookmarks" h={94} cut={16} bold />
          <SideTab label="Signatures" h={82} cut={8} />
          <SideTab label="Pages" h={56} cut={8} />
          <Spacer />
          <SideTab label="Attachments" h={101} cut={16} />
          <SideTab label="Comments" h={92} cut={16} overlap />
        </TabStrip>
        <Splitter><SplitHandle /></Splitter>
        <Pages>
          <Sheet>
            <PartsHead>
              <KitNames>{kitNames.map((n) => <span key={n}>{n}</span>)}</KitNames>
              <Brand />
            </PartsHead>
            <PartsTable>
              <colgroup>{columns.map(([, w], i) => <col key={i} width={w} />)}</colgroup>
              <thead><tr>{columns.map(([c], i) => <th key={i} scope="col">{c}</th>)}</tr></thead>
              {parts.map((group, g) => (
                <tbody key={g}>
                  {group.map((row) => <tr key={row[0]}>{row.map((cell, i) => <td key={i}>{cell}</td>)}</tr>)}
                </tbody>
              ))}
            </PartsTable>
          </Sheet>
          <Sheet>
            <LogoRow><Brand /></LogoRow>
            <DrawingRow><Diagram /></DrawingRow>
          </Sheet>
        </Pages>
        <ScrollBar>
          <SplitBox />
          <ScrollButton $line aria-label="Expand"><Icon w={6} h={10}><path d="M.5 0v10L6 5z" fill="#000" /></Icon></ScrollButton>
          <ScrollButton aria-label="Scroll up"><Icon w={8} h={6}><path d="M1 5l3-3 3 3" stroke="#505050" strokeWidth="2" /></Icon></ScrollButton>
          <Spacer $grow={423} />
          <Thumb />
          <Spacer $grow={95} />
          <ScrollButton aria-label="Scroll down"><Icon w={8} h={6}><path d="M1 1l3 3 3-3" stroke="#505050" strokeWidth="2" /></Icon></ScrollButton>
        </ScrollBar>
      </Body>

      <StatusBar>
        <StatusSide>
          <StatusButton aria-label="Full screen">
            <Icon w={16} h={16}><path d="M.5.5h15v12H.5z" fill="#b9b9b9" stroke="#777" /><path d="M2 2h12v9H2z" fill="#0b0f1c" /><path d="M5 3h6v7H5z" fill="#a9c8ea" /><path d="M6 5h4M6 7h4" stroke="#44628a" /><path d="M5 13h6v1.500H4v1h8" stroke="#777" /><path d="M12 12h2" stroke="#22d32a" /></Icon>
          </StatusButton>
          <StatusButton aria-label="Hide toolbars">
            <Icon w={14} h={14}><path d="M.5.5h13v13H.5z" fill="url(#paper)" stroke="#808080" /><path d="M1 3.500h12" stroke="#808080" /><path d="M4 9h6" stroke="#27509a" strokeWidth="2" /></Icon>
          </StatusButton>
        </StatusSide>
        <Pager>
          <StatusButton aria-label="First page"><NavIcon dir="l" bar /></StatusButton>
          <StatusButton aria-label="Previous page"><NavIcon dir="l" /></StatusButton>
          <PageField aria-label="Page" defaultValue="402 of 491" />
          <StatusButton aria-label="Next page"><NavIcon dir="r" /></StatusButton>
          <StatusButton aria-label="Last page"><NavIcon dir="r" bar /></StatusButton>
          <Divider />
          <StatusButton aria-label="Previous view"><RoundNav on /></StatusButton>
          <StatusButton aria-label="Next view"><RoundNav /></StatusButton>
        </Pager>
        <StatusSide $end>
          <StatusButton aria-label="Single page"><LayoutIcon kind="single" /></StatusButton>
          <StatusButton aria-label="Continuous"><LayoutIcon kind="cont" /></StatusButton>
          <StatusButton aria-label="Continuous facing"><LayoutIcon kind="contFacing" /></StatusButton>
          <StatusButton aria-label="Facing" $active><LayoutIcon kind="facing" /></StatusButton>
        </StatusSide>
      </StatusBar>
    </Window>
  );
}
